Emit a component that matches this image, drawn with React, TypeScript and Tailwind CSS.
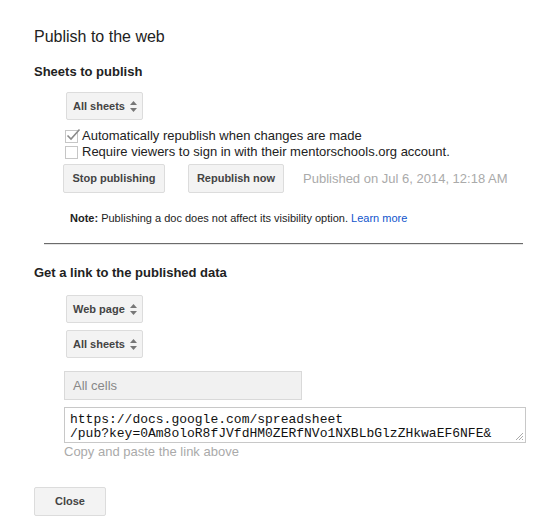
import React from 'react';

const Select = ({ label }: { label: string }) => (
  <div className="flex h-[28px] w-[77px] items-center justify-between rounded-[2px] border border-[#dcdcdc] bg-[#f3f3f3] pl-[6px] pr-[5px] text-[11px] font-bold text-[#444]">
    <span>{label}</span>
    <svg width="7" height="11" viewBox="0 0 7 11" className="fill-[#777]">
      <path d="M3.5 0L7 4H0z" />
      <path d="M3.5 11L0 7h7z" />
    </svg>
  </div>
);

const Button = ({ label, w }: { label: string; w: string }) => (
  <button className={`h-[29px] ${w} rounded-[2px] border border-[#dcdcdc] bg-[#f3f3f3] text-[11px] font-bold text-[#444]`}>
    {label}
  </button>
);

export default function App() {
  return (
    <div className="h-[527px] w-[537px] bg-white pt-[27px] text-[#222]" style={{ fontFamily: '"Liberation Sans", Arial, sans-serif' }}>
      <div className="pl-[34px] text-[16px] leading-[20px]">Publish to the web</div>

      <div className="mt-[17px] pl-[34px] text-[13px] font-bold leading-[16px]">Sheets to publish</div>

      <div className="mt-[12px] pl-[66px]">
        <Select label="All sheets" />
      </div>

      <div className="mt-[8px] pl-[65px] text-[13px] leading-[16px]">
        <label className="flex items-center gap-[4px]">
          <span className="relative h-[13px] w-[13px] border border-[#c6c6c6] bg-white">
            <svg width="15" height="13" viewBox="0 0 15 13" className="absolute left-[0px] top-[-3px]">
              <path d="M1.5 7.5L5 11L13.5 1.5" fill="none" stroke="#8a8a8a" strokeWidth="1.6" />
            </svg>
          </span>
          Automatically republish when changes are made
        </label>
        <label className="flex items-center gap-[4px]">
          <span className="h-[13px] w-[13px] border border-[#c6c6c6] bg-white" />
          Require viewers to sign in with their mentorschools.org account.
        </label>
      </div>

      <div className="mt-[4px] flex items-center pl-[63px]">
        <Button label="Stop publishing" w="w-[102px]" />
        <div className="ml-[23px]">
          <Button label="Republish now" w="w-[96px]" />
        </div>
        <span className="ml-[19px] text-[13px] text-[#aaa]">Published on Jul 6, 2014, 12:18 AM</span>
      </div>

      <div className="mt-[18px] pl-[70px] text-[11px] leading-[14px]">
        <span className="font-bold">Note:</span> Publishing a doc does not affect its visibility option.{' '}
        <span className="text-[#1155cc]">Learn more</span>
      </div>

      <div className="ml-[44px] mt-[18px] w-[479px] border-t border-[#6b6b6b] border-b border-b-[#e5e5e5]" />

      <div className="mt-[20px] pl-[34px] text-[13px] font-bold leading-[16px]">Get a link to the published data</div>

      <div className="mt-[14px] flex flex-col gap-[7px] pl-[66px]">
        <Select label="Web page" />
        <Select label="All sheets" />
      </div>

      <div className="mt-[13px] pl-[64px]">
        <div className="flex h-[29px] w-[238px] items-center border border-[#d9d9d9] bg-[#f1f1f1] pl-[8px] text-[13px] text-[#888]">
          All cells
        </div>
      </div>

      <div className="mt-[7px] pl-[64px]">
        <div className="relative h-[36px] w-[462px] border border-[#c8c8c8] bg-white px-[5px] pt-[5px] text-[13px] leading-[14px] text-[#111]" style={{ fontFamily: '"Liberation Mono", "Courier New", monospace' }}>
          <div>https://docs.google.com/spreadsheet</div>
          <div>/pub?key=0Am8oloR8fJVfdHM0ZERfNVo1NXBLbGlzZHkwaEF6NFE&amp;</div>
          <svg width="9" height="9" viewBox="0 0 9 9" className="absolute bottom-[1px] right-[1px]">
            <path d="M8 1L1 8M8 4L4 8M8 7L7 8" stroke="#aaa" strokeWidth="1" />
          </svg>
        </div>
      </div>

      <div className="mt-[1px] pl-[64px] text-[13px] leading-[16px] text-[#aaa]">Copy and paste the link above</div>

      <div className="mt-[27px] pl-[34px]">
        <Button label="Close" w="w-[72px]" />
      </div>
    </div>
  );
}
